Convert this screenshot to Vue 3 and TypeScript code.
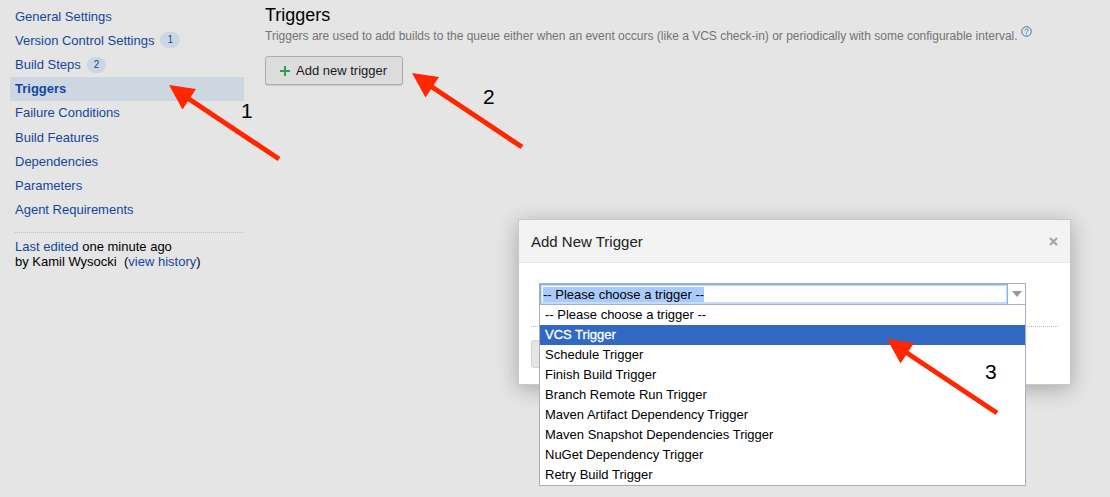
<script setup lang="ts">
import { onMounted, ref } from 'vue'

interface NavItem {
  label: string
  count?: number
}

interface Arrow {
  x: number
  y: number
}

interface Label {
  text: string
  x: number
  y: number
}

const navItems: NavItem[] = [
  { label: 'General Settings' },
  { label: 'Version Control Settings', count: 1 },
  { label: 'Build Steps', count: 2 },
  { label: 'Triggers' },
  { label: 'Failure Conditions' },
  { label: 'Build Features' },
  { label: 'Dependencies' },
  { label: 'Parameters' },
  { label: 'Agent Requirements' },
]
const currentPage = 'Triggers'

const placeholder = '-- Please choose a trigger --'
const triggers: string[] = [
  placeholder,
  'VCS Trigger',
  'Schedule Trigger',
  'Finish Build Trigger',
  'Branch Remote Run Trigger',
  'Maven Artifact Dependency Trigger',
  'Maven Snapshot Dependencies Trigger',
  'NuGet Dependency Trigger',
  'Retry Build Trigger',
]
const active = ref('VCS Trigger')
const query = ref(placeholder)
const field = ref<HTMLInputElement | null>(null)

const arrows: Arrow[] = [
  { x: 169, y: 85 },
  { x: 412, y: 73 },
  { x: 887, y: 339 },
]
const labels: Label[] = [
  { text: '1', x: 241, y: 118 },
  { text: '2', x: 483, y: 104 },
  { text: '3', x: 985, y: 379 },
]

function choose(name: string) {
  active.value = name
  query.value = name
}

onMounted(() => {
  field.value?.focus()
  field.value?.select()
})
</script>

<template>
  <div class="page">
    <aside class="sidebar">
      <nav class="nav" aria-label="Build configuration settings">
        <a
          v-for="item in navItems"
          :key="item.label"
          href="#"
          class="nav-link"
          :class="{ current: item.label === currentPage }"
        >
          {{ item.label }}
          <span v-if="item.count" class="badge">{{ item.count }}</span>
        </a>
      </nav>
      <div class="edited">
        <div><a href="#">Last edited</a> one minute ago</div>
        <div>by Kamil Wysocki &nbsp;(<a href="#">view history</a>)</div>
      </div>
    </aside>

    <main class="content">
      <h1 class="title">Triggers</h1>
      <p class="description">
        Triggers are used to add builds to the queue either when an event occurs (like a VCS check-in) or periodically with some configurable interval.
        <a href="#" class="help" aria-label="Help">
          <svg width="11" height="11" viewBox="0 0 11 11" fill="none" stroke="#3a78ad">
            <circle cx="5.5" cy="5.5" r="4.8" stroke-width="1" />
            <path d="M3.9 4.4C3.9 2.3 7.1 2.3 7.1 4.3C7.1 5.4 5.5 5.3 5.5 6.7M5.5 7.5V8.5" stroke-width="0.9" />
          </svg>
        </a>
      </p>
      <button type="button" class="add">
        <svg width="10" height="10" viewBox="0 0 10 10" aria-hidden="true">
          <path d="M5 0V10M0 5H10" stroke="#2f9e4f" stroke-width="2" />
        </svg>
        Add new trigger
      </button>
    </main>

    <section class="dialog" role="dialog" aria-labelledby="dialog-title">
      <header class="dialog-head">
        <h2 id="dialog-title">Add New Trigger</h2>
        <button type="button" class="close" aria-label="Close">
          <svg width="9" height="9" viewBox="0 0 9 9" aria-hidden="true">
            <path d="M1 1L8 8M8 1L1 8" stroke="#a6a6a6" stroke-width="2.2" />
          </svg>
        </button>
      </header>
      <div class="dialog-body">
        <div class="combo">
          <input
            ref="field"
            v-model="query"
            type="text"
            role="combobox"
            aria-label="Trigger"
            aria-expanded="true"
            aria-controls="trigger-list"
          />
          <button type="button" class="toggle" aria-label="Show triggers">
            <svg width="10" height="6" viewBox="0 0 10 6" aria-hidden="true">
              <path d="M0 0H10L5 6Z" fill="#999" />
            </svg>
          </button>
          <ul id="trigger-list" class="options" role="listbox">
            <li
              v-for="name in triggers"
              :key="name"
              role="option"
              :aria-selected="name === active"
              :class="{ active: name === active }"
              @click="choose(name)"
            >
              {{ name }}
            </li>
          </ul>
        </div>
        <footer class="dialog-foot">
          <button type="button" class="save" aria-label="Save"></button>
        </footer>
      </div>
    </section>

    <svg class="marks" aria-hidden="true">
      <g v-for="a in arrows" :key="a.x" :transform="`translate(${a.x} ${a.y})`">
        <path d="M17 12L110 74" stroke="#ff2600" stroke-width="5" />
        <path d="M0 0L27 4L13.500 24.500Z" fill="#ff2600" />
      </g>
      <text v-for="l in labels" :key="l.text" :x="l.x" :y="l.y">{{ l.text }}</text>
    </svg>
  </div>
</template>

<style>
body {
  margin: 0;
  background: #e5e5e5;
}
</style>

<style scoped>
.page {
  position: relative;
  display: flex;
  box-sizing: border-box;
  min-height: 100vh;
  padding: 4px 10px 0;
  gap: 21px;
  background: #e5e5e5;
  color: #000;
  font: 13px/15px "Liberation Sans", Arial, sans-serif;
}

a {
  color: #1446a0;
  text-decoration: none;
}

button {
  font: inherit;
}

.sidebar {
  flex: 0 0 234px;
}

.nav {
  display: grid;
  grid-auto-rows: 1fr;
  height: 218px;
}

.nav-link {
  display: flex;
  align-items: center;
  gap: 6px;
  padding: 0 5px;
}

.current {
  background: #cdd7e2;
  font-weight: bold;
}

.badge {
  padding: 0 7px;
  border-radius: 8px;
  background: #cdd7e2;
  font-size: 10px;
  line-height: 16px;
}

.edited {
  margin: 10px 0 0 5px;
  padding-top: 6px;
  border-top: 1px dotted #b9c0cf;
}

.content {
  flex: 1;
  min-width: 0;
}

.title {
  margin: 0;
  font-size: 18px;
  font-weight: normal;
  line-height: 22px;
}

.description {
  margin: 0 0 12px;
  color: #737373;
  font-size: 12px;
  line-height: 16px;
}

.help {
  display: inline-block;
  height: 11px;
  vertical-align: 3px;
  line-height: 0;
}

.add {
  display: flex;
  align-items: center;
  gap: 6px;
  height: 29px;
  padding: 0 15px 0 14px;
  border: 1px solid #adadad;
  border-radius: 3px;
  background: #dcdcdc;
  box-shadow: 0 1px 1px #cacaca;
  color: #1a1a1a;
}

.dialog {
  position: absolute;
  top: 219px;
  left: 518px;
  box-sizing: border-box;
  width: 553px;
  border: 1px solid #c8c8c8;
  background: #fff;
  box-shadow: 0 4px 20px rgba(0, 0, 0, 0.28);
}

.dialog-head {
  display: flex;
  align-items: center;
  justify-content: space-between;
  height: 42px;
  padding: 0 12px;
  border-bottom: 1px solid #e6e6e6;
  background: #f3f3f3;
}

.dialog-head h2 {
  margin: 0;
  color: #222;
  font-size: 15px;
  font-weight: 300;
}

.close {
  display: flex;
  padding: 0;
  border: 0;
  background: none;
}

.dialog-body {
  padding: 20px 12px 16px;
}

.combo {
  position: relative;
  display: flex;
  box-sizing: border-box;
  height: 22px;
  margin: 0 32px 0 8px;
  border: 1px solid #a9adc4;
}

.combo input {
  flex: 1;
  min-width: 0;
  padding: 0 3px;
  border: 0;
  outline: 0;
  background: #fff;
  box-shadow: inset 1px 1px #7db4f2, inset -1px 1px #7db4f2, inset 0 0 0 2px #c4dcf9;
  color: #000;
  font: inherit;
}

.combo input::selection {
  background: #a9cbf9;
  color: #000;
}

.toggle {
  display: flex;
  align-items: center;
  justify-content: center;
  width: 17px;
  padding: 0;
  border: 0;
  background: #fff;
}

.options {
  position: absolute;
  z-index: 1;
  top: 20px;
  right: -1px;
  left: -1px;
  margin: 0;
  padding: 0;
  border: 1px solid #a9adc4;
  background: #fff;
  list-style: none;
}

.options li {
  padding: 0 5px;
  line-height: 20px;
}

.options .active {
  background: #3068c2;
  color: #fff;
  -webkit-text-stroke: 0.3px #fff;
}

.dialog-foot {
  margin-top: 21px;
  padding-top: 13px;
  border-top: 1px dotted #b8b8b8;
}

.save {
  display: block;
  width: 60px;
  height: 28px;
  border: 1px solid #d2d2d2;
  border-radius: 3px;
  background: #e5e5e5;
}

.marks {
  position: absolute;
  z-index: 2;
  inset: 0;
  width: 100%;
  height: 100%;
  pointer-events: none;
}

.marks text {
  font-size: 21px;
}
</style>
